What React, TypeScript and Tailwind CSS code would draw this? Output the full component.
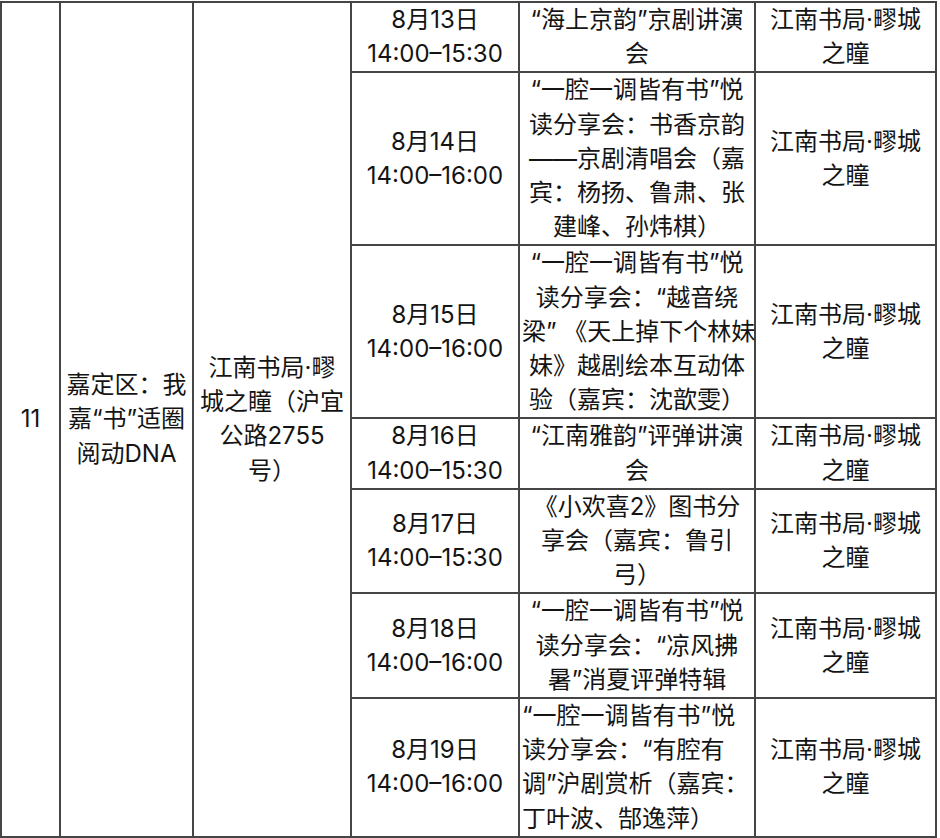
const schedule = [
  {
    date: "8月13日",
    time: "14:00–15:30",
    event: ["“海上京韵”京剧讲演", "会"],
  },
  {
    date: "8月14日",
    time: "14:00–16:00",
    event: [
      "“一腔一调皆有书”悦",
      "读分享会：书香京韵",
      "——京剧清唱会（嘉",
      "宾：杨扬、鲁肃、张",
      "建峰、孙炜棋）",
    ],
  },
  {
    date: "8月15日",
    time: "14:00–16:00",
    event: [
      "“一腔一调皆有书”悦",
      "读分享会：“越音绕",
      "梁” 《天上掉下个林妹",
      "妹》越剧绘本互动体",
      "验（嘉宾：沈歆雯）",
    ],
  },
  {
    date: "8月16日",
    time: "14:00–15:30",
    event: ["“江南雅韵”评弹讲演", "会"],
  },
  {
    date: "8月17日",
    time: "14:00–15:30",
    event: ["《小欢喜2》图书分", "享会（嘉宾：鲁引", "弓）"],
  },
  {
    date: "8月18日",
    time: "14:00–16:00",
    event: ["“一腔一调皆有书”悦", "读分享会：“凉风拂", "暑”消夏评弹特辑"],
  },
  {
    date: "8月19日",
    time: "14:00–16:00",
    event: [
      "“一腔一调皆有书”悦",
      "读分享会：“有腔有",
      "调”沪剧赏析（嘉宾：",
      "丁叶波、郜逸萍）",
    ],
    left: true,
  },
];

function Lines({ lines }: { lines: string[] }) {
  return (
    <>
      {lines.map((line, i) => (
        <span key={i} className="block whitespace-nowrap">
          {line}
        </span>
      ))}
    </>
  );
}

const cell = "border-2 border-[#454545] px-[2px] py-0 align-middle";

export default function App() {
  return (
    <div className="min-h-[838px] w-[940px] bg-white">
      <table className="mt-px w-[937px] table-fixed border-collapse font-['Inter','Noto_Sans_CJK_SC',sans-serif] text-[24px] leading-[34.2px] text-[#141414]">
        <colgroup>
          <col className="w-[59px]" />
          <col className="w-[133px]" />
          <col className="w-[158px]" />
          <col className="w-[168px]" />
          <col className="w-[236px]" />
          <col className="w-[181px]" />
        </colgroup>
        <tbody>
          {schedule.map((row, i) => (
            <tr key={row.date}>
              {i === 0 && (
                <>
                  <td rowSpan={schedule.length} className={cell + " text-center"}>
                    11
                  </td>
                  <td rowSpan={schedule.length} className={cell + " text-center"}>
                    <Lines lines={["嘉定区：我", "嘉“书”适圈", "阅动DNA"]} />
                  </td>
                  <td rowSpan={schedule.length} className={cell + " text-center"}>
                    <Lines lines={["江南书局·疁", "城之瞳（沪宜", "公路2755", "号）"]} />
                  </td>
                </>
              )}
              <td className={cell + " text-center"}>
                <Lines lines={[row.date, row.time]} />
              </td>
              <td className={cell + (row.left ? " text-left" : " text-center")}>
                <Lines lines={row.event} />
              </td>
              <td className={cell + " text-center"}>
                <Lines lines={["江南书局·疁城", "之瞳"]} />
              </td>
            </tr>
          ))}
        </tbody>
      </table>
    </div>
  );
}
